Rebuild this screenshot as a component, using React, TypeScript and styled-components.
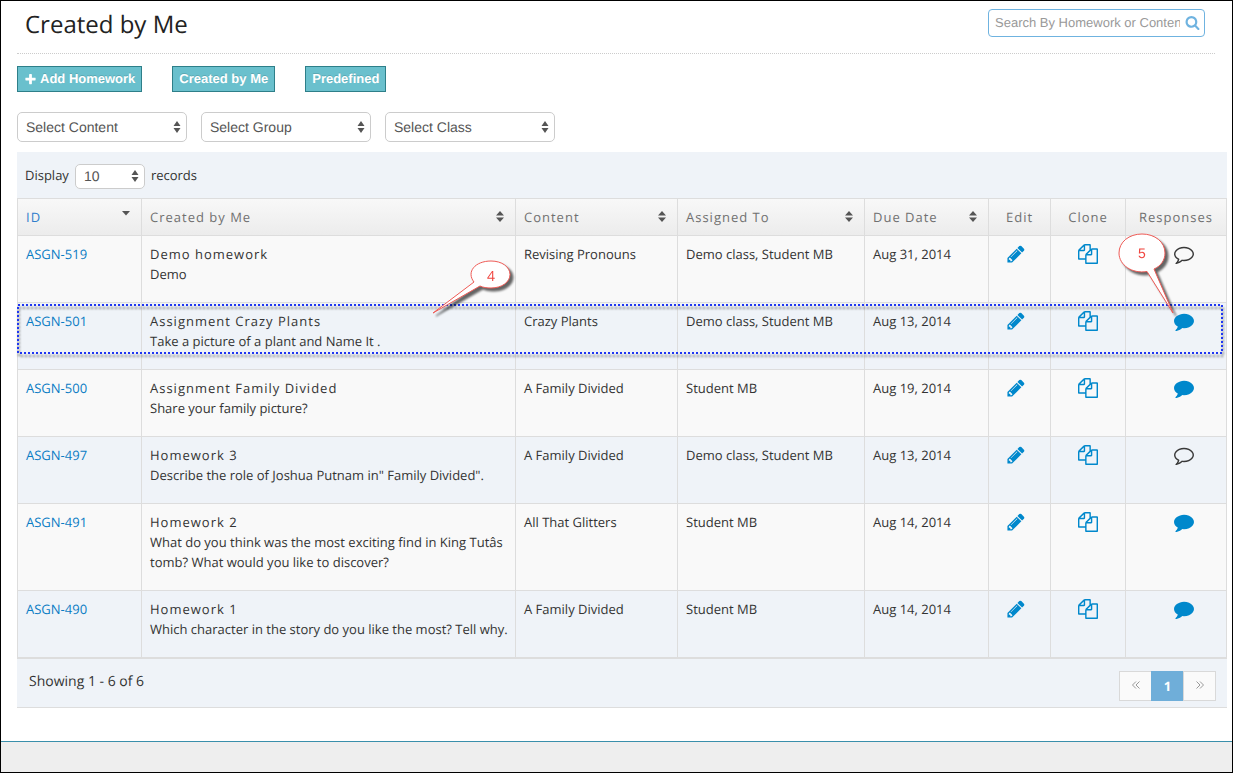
import React from 'react';
import styled, { createGlobalStyle, css } from 'styled-components';

const sans = `"Open Sans", "Noto Sans", sans-serif`;
const helvetica = `"Liberation Sans", Arial, sans-serif`;

const GlobalStyle = createGlobalStyle`
  * { box-sizing: border-box; }
  body {
    margin: 0;
    background: #fff;
    color: #333;
    font: 13px/20px ${sans};
    text-rendering: geometricPrecision;
  }
  button, input, select { margin: 0; font: inherit; color: inherit; text-rendering: inherit; }
`;

const Page = styled.div`
  display: flex;
  flex-direction: column;
  min-height: 100vh;
  border: 1px solid #000;
`;

const Main = styled.main`
  flex: 1;
  padding: 0 5px 32px 16px;
`;

const TitleBar = styled.header`
  display: flex;
  justify-content: space-between;
  align-items: center;
  height: 53px;
  margin-right: 12px;
  padding: 0 10px 8px 8px;
  border-bottom: 1px dotted #ccc;
`;

const Title = styled.h1`
  margin: 0;
  padding-top: 4px;
  color: #222;
  font-size: 24px;
  line-height: 32px;
  font-weight: 400;
`;

const SearchBox = styled.label`
  position: relative;
  display: block;
  width: 217px;
  height: 28px;
`;

const SearchInput = styled.input`
  width: 100%;
  height: 28px;
  padding: 0 24px 1px 6px;
  border: 1px solid #6fb3e0;
  border-radius: 4px;
  background: #fff;
  font: 13px/20px ${helvetica};
  color: #555;
  &::placeholder { color: #999; opacity: 1; }
`;

const SearchMark = styled.span`
  position: absolute;
  top: 6px;
  right: 5px;
  display: flex;
  color: #6fb3e0;
`;

const Actions = styled.div`
  display: flex;
  gap: 30px;
  margin-top: 12px;
`;

const ActionButton = styled.button`
  display: flex;
  align-items: center;
  gap: 3px;
  height: 26px;
  padding: 0 6px;
  border: 1px solid #2e7f89;
  background: #6ac0cd;
  color: #fff;
  font: 700 13px/20px ${helvetica};
  text-shadow: 0 -1px 0 rgba(0, 0, 0, 0.15);
`;

const Filters = styled.div`
  display: flex;
  gap: 14px;
  margin: 20px 0 10px;
`;

const SelectWrap = styled.span<{ $small?: boolean }>`
  position: relative;
  display: block;
  width: ${p => (p.$small ? 70 : 170)}px;
  height: ${p => (p.$small ? 25 : 30)}px;
`;

const SelectField = styled.select`
  appearance: none;
  width: 100%;
  height: 100%;
  padding: 0 20px 0 8px;
  border: 1px solid #ccc;
  border-radius: 5px;
  background: #fff;
  color: #555;
  font: 14px/20px ${helvetica};
`;

const SelectMark = styled.span`
  position: absolute;
  top: 0;
  right: 6px;
  height: 100%;
  display: flex;
  align-items: center;
  color: #555;
  pointer-events: none;
`;

const Panel = styled.section`
  background: #eff3f8;
`;

const LengthBar = styled.label`
  display: flex;
  align-items: center;
  gap: 6px;
  height: 46px;
  padding: 2px 8px 0;
`;

const LengthText = styled.span`
  padding-bottom: 2px;
`;

const Grid = styled.table`
  width: 100%;
  table-layout: fixed;
  border-collapse: separate;
  border-spacing: 0;
  border-left: 1px solid #ddd;
`;

const Th = styled.th<{ $center?: boolean; $active?: boolean }>`
  height: 38px;
  padding: 0 8px;
  border: solid #ddd;
  border-width: 1px 1px 1px 0;
  background: linear-gradient(#f8f8f8, #ececec);
  color: ${p => (p.$active ? '#307ecc' : '#707070')};
  font-weight: 400;
  letter-spacing: 1px;
  text-align: ${p => (p.$center ? 'center' : 'left')};
  white-space: nowrap;
`;

const SortButton = styled.button`
  display: flex;
  justify-content: space-between;
  align-items: center;
  width: 100%;
  padding: 0 2px 0 0;
  border: 0;
  background: none;
  letter-spacing: 1px;
  svg { color: #555; }
`;

const Row = styled.tr<{ $alt: boolean }>`
  position: relative;
  background: ${p => (p.$alt ? '#eff3f8' : '#f9f9f9')};
`;

const Td = styled.td<{ $icon?: 'edit' | 'clone' | 'responses' }>`
  position: relative;
  padding: 8px 2px 8px 8px;
  border: solid #ddd;
  border-width: 0 1px 1px 0;
  vertical-align: top;
  ${p => p.$icon && css`
    text-align: center;
    padding-left: ${p.$icon === 'responses' ? 24 : 8}px;
    padding-right: ${p.$icon === 'edit' ? 15 : 8}px;
  `}
`;

const FirstTd = styled(Td)`
  position: static;
`;

const IdLink = styled.a`
  color: #0a7cc4;
  text-decoration: none;
`;

const Name = styled.div`
  letter-spacing: 1px;
`;

const Description = styled.p`
  margin: 0 0 10px;
`;

const IconLink = styled.a<{ $dark?: boolean }>`
  display: inline-flex;
  vertical-align: top;
  color: ${p => (p.$dark ? '#393939' : '#0088cc')};
`;

const Highlight = styled.svg`
  position: absolute;
  left: -1px;
  top: 1px;
  width: calc(100% - 3px);
  height: 50px;
  overflow: visible;
  pointer-events: none;
  z-index: 1;
  filter: drop-shadow(1px 3px 1px rgba(0, 0, 0, 0.5));
  rect {
    width: calc(100% - 2px);
    height: 48px;
  }
`;

const Callout = styled.svg<{ $right: number; $top: number }>`
  position: absolute;
  right: ${p => p.$right}px;
  top: ${p => p.$top}px;
  overflow: visible;
  pointer-events: none;
  z-index: 2;
  filter: drop-shadow(3px 3px 1px rgba(0, 0, 0, 0.6));
`;

const PanelFooter = styled.footer`
  display: flex;
  justify-content: space-between;
  align-items: flex-start;
  height: 50px;
  padding: 12px 11px 0 12px;
  border: solid #ddd;
  border-width: 1px 0;
  font-size: 14px;
  line-height: 22px;
`;

const Pager = styled.nav`
  display: flex;
`;

const PageButton = styled.button<{ $current?: boolean }>`
  display: flex;
  align-items: center;
  justify-content: center;
  width: 33px;
  height: 30px;
  padding: 0;
  border: 1px solid ${p => (p.$current ? '#6faed9' : '#d9d9d9')};
  background: ${p => (p.$current ? '#6faed9' : '#fafafa')};
  color: ${p => (p.$current ? '#fff' : '#999')};
  font-size: 13px;
  font-weight: ${p => (p.$current ? 700 : 400)};
  & + & { margin-left: -1px; }
`;

const BottomStrip = styled.div`
  height: 31px;
  border-top: 1px solid #3a8fab;
  background: #eee;
`;

const paths = {
  pencil:
    'M491 1536l91-91-235-235-91 91v107h128v128h107zm523-928q0-22-22-22-10 0-17 7l-542 542q-7 7-7 17 0 22 22 22 10 0 17-7l542-542q7-7 7-17zm-54-192l416 416-832 832h-416v-416zm683 96q0 53-37 90l-166 166-416-416 166-165q36-38 90-38 53 0 91 38l235 234q37 39 37 91z',
  files:
    'M1696 384q40 0 68 28t28 68v1216q0 40-28 68t-68 28h-960q-40 0-68-28t-28-68v-288h-544q-40 0-68-28t-28-68v-672q0-40 20-88t48-76l408-408q28-28 76-48t88-20h416q40 0 68 28t28 68v328q68-40 128-40h416zm-544 213l-299 299h299v-299zm-640-384l-299 299h299v-299zm196 647l316-316v-416h-384v416q0 40-28 68t-68 28h-416v640h512v-256q0-40 20-88t48-76zm956 804v-1152h-384v416q0 40-28 68t-68 28h-416v640h896z',
  comment:
    'M1792 896q0 174-120 321.5t-326 233-450 85.5q-70 0-145-8-198 175-460 242-49 14-114 22-17 2-30.5-9t-17.5-29v-1q-3-4-.5-12t2-10 4.5-9.5l6-9 7-8.5 8-9q7-8 31-34.5t34.5-38 31-39.5 32.5-51 27-59 26-76q-157-89-247.5-220t-90.5-281q0-130 71-248.5t191-204.5 286-136.5 348-50.5q244 0 450 85.5t326 233 120 321.5z',
  commentOutline:
    'M896 384q-204 0-381.5 69.5t-282 187.5-104.5 255q0 112 71.5 213.5t201.5 175.5l87 50-27 96q-24 91-70 172 152-63 275-171l43-38 57 6q69 8 130 8 204 0 381.5-69.5t282-187.5 104.5-255-104.5-255-282-187.5-381.5-69.5zm896 512q0 174-120 321.5t-326 233-450 85.5q-70 0-145-8-198 175-460 242-49 14-114 22h-5q-15 0-27-10.5t-16-27.5v-1q-3-4-.5-12t2-10 4.5-9.5l6-9 7-8.5 8-9q7-8 31-34.5t34.5-38 31-39.5 32.5-51 27-59 26-76q-157-89-247.5-220t-90.5-281q0-174 120-321.5t326-233 450-85.5 450 85.5 326 233 120 321.5z',
  search:
    'M1216 832q0-185-131.5-316.5t-316.5-131.5-316.5 131.5-131.5 316.5 131.5 316.5 316.5 131.5 316.5-131.5 131.5-316.5zm512 832q0 52-38 90t-90 38q-54 0-90-38l-343-342q-179 124-399 124-143 0-273.5-55.5t-225-150-150-225-55.5-273.5 55.5-273.5 150-225 225-150 273.5-55.5 273.5 55.5 225 150 150 225 55.5 273.5q0 220-124 399l343 343q37 37 37 90z',
  plus:
    'M1600 736v192q0 40-28 68t-68 28h-416v416q0 40-28 68t-68 28h-192q-40 0-68-28t-28-68v-416h-416q-40 0-68-28t-28-68v-192q0-40 28-68t68-28h416v-416q0-40 28-68t68-28h192q40 0 68 28t28 68v416h416q40 0 68 28t28 68z',
};

const Icon = ({ name, size = 20 }: { name: keyof typeof paths; size?: number }) => (
  <svg width={size} height={size} viewBox="0 0 1792 1792" fill="currentColor" aria-hidden="true">
    <path d={paths[name]} />
  </svg>
);

const SortBoth = () => (
  <svg width="10" height="14" viewBox="0 0 10 14" fill="currentColor" aria-hidden="true">
    <path d="M5 1 9 5.5H1zM1 7.5h8L5 12z" />
  </svg>
);

const SortDown = () => (
  <svg width="10" height="14" viewBox="0 0 10 14" fill="currentColor" aria-hidden="true">
    <path d="M1 1h8L5 5.5z" />
  </svg>
);

const Arrows = () => (
  <svg width="8" height="14" viewBox="0 0 8 14" fill="currentColor" aria-hidden="true">
    <path d="M4 1 7.5 6h-7zM.5 8h7l-3.5 5z" />
  </svg>
);

const DoubleAngle = ({ next }: { next?: boolean }) => (
  <svg width="8" height="10" viewBox="0 0 8 10" fill="none" stroke="currentColor" aria-hidden="true">
    <path d={next ? 'M.5.5 4 4 .5 7.5M4 .5 7.5 4 4 7.5' : 'M7.5.5 4 4l3.5 3.5M4 .5.5 4 4 7.5'} />
  </svg>
);

const Select = ({ label, options, small }: { label: string; options: string[]; small?: boolean }) => (
  <SelectWrap $small={small}>
    <SelectField aria-label={label}>
      {options.map(o => <option key={o}>{o}</option>)}
    </SelectField>
    <SelectMark><Arrows /></SelectMark>
  </SelectWrap>
);

type Homework = {
  id: string; name: string; text: string; content: string; to: string; due: string;
  answered: boolean; marked?: boolean;
};

const rows: Homework[] = [
  { id: 'ASGN-519', name: 'Demo homework', text: 'Demo', content: 'Revising Pronouns', to: 'Demo class, Student MB', due: 'Aug 31, 2014', answered: false },
  { id: 'ASGN-501', name: 'Assignment Crazy Plants', text: 'Take a picture of a plant and Name It .', content: 'Crazy Plants', to: 'Demo class, Student MB', due: 'Aug 13, 2014', answered: true, marked: true },
  { id: 'ASGN-500', name: 'Assignment Family Divided', text: 'Share your family picture?', content: 'A Family Divided', to: 'Student MB', due: 'Aug 19, 2014', answered: true },
  { id: 'ASGN-497', name: 'Homework 3', text: 'Describe the role of Joshua Putnam in" Family Divided".', content: 'A Family Divided', to: 'Demo class, Student MB', due: 'Aug 13, 2014', answered: false },
  { id: 'ASGN-491', name: 'Homework 2', text: 'What do you think was the most exciting find in King Tutâs tomb? What would you like to discover?', content: 'All That Glitters', to: 'Student MB', due: 'Aug 14, 2014', answered: true },
  { id: 'ASGN-490', name: 'Homework 1', text: 'Which character in the story do you like the most? Tell why.', content: 'A Family Divided', to: 'Student MB', due: 'Aug 14, 2014', answered: true },
];

const columnWidths = [124, undefined, 162, 187, 124, 62, 75, 101];

const RowOutline = () => (
  <Highlight aria-hidden="true">
    <rect x="1" y="1" fill="none" stroke="#1f36f2" strokeWidth="2" strokeDasharray="2 2" />
  </Highlight>
);

const CalloutFour = () => (
  <Callout $right={3} $top={-43} width="80" height="56" viewBox="0 0 80 56">
    <path
      d="M42 22C34 12 43 1 59 1C70 1 78 7 78 14.5C78 22 70 28 59 28C55 28 51 27.5 48 26L1 53z"
      fill="#fff" stroke="#ee5a55" strokeWidth="1"
    />
    <text x="59" y="21" textAnchor="middle" fontSize="14" fill="#f0453f" fontFamily='"Open Sans", sans-serif'>4</text>
  </Callout>
);

const CalloutFive = () => (
  <Callout $right={51} $top={-70} width="57" height="82" viewBox="0 0 57 82">
    <path
      d="M29 38.5C14 41 1 32 1 20C1 9 11 1 24 1C37 1 47 9 47 20C47 27 43 33 36 36L55 80z"
      fill="#fff" stroke="#ee5a55" strokeWidth="1"
    />
    <text x="24" y="25" textAnchor="middle" fontSize="14" fill="#f0453f" fontFamily='"Liberation Sans", sans-serif'>5</text>
  </Callout>
);

export default function App() {
  return (
    <Page>
      <GlobalStyle />
      <Main>
        <TitleBar>
          <Title>Created by Me</Title>
          <SearchBox>
            <SearchInput type="text" placeholder="Search By Homework or Content" aria-label="Search" />
            <SearchMark><Icon name="search" size={15} /></SearchMark>
          </SearchBox>
        </TitleBar>

        <Actions>
          <ActionButton type="button"><Icon name="plus" size={13} />Add Homework</ActionButton>
          <ActionButton type="button">Created by Me</ActionButton>
          <ActionButton type="button">Predefined</ActionButton>
        </Actions>

        <Filters>
          <Select label="Content" options={['Select Content']} />
          <Select label="Group" options={['Select Group']} />
          <Select label="Class" options={['Select Class']} />
        </Filters>

        <Panel>
          <LengthBar>
            <LengthText>Display</LengthText>
            <Select small label="Records per page" options={['10', '25', '50', '100']} />
            <LengthText>records</LengthText>
          </LengthBar>

          <Grid>
            <colgroup>
              {columnWidths.map((w, i) => <col key={i} width={w} />)}
            </colgroup>
            <thead>
              <tr>
                <Th $active><SortButton type="button">ID<SortDown /></SortButton></Th>
                {['Created by Me', 'Content', 'Assigned To', 'Due Date'].map(h => (
                  <Th key={h}><SortButton type="button">{h}<SortBoth /></SortButton></Th>
                ))}
                {['Edit', 'Clone', 'Responses'].map(h => <Th key={h} $center>{h}</Th>)}
              </tr>
            </thead>
            <tbody>
              {rows.map((r, i) => (
                <Row key={r.id} $alt={i % 2 === 1}>
                  <FirstTd>
                    <IdLink href="#">{r.id}</IdLink>
                    {r.marked && <RowOutline />}
                  </FirstTd>
                  <Td>
                    <Name>{r.name}</Name>
                    <Description>{r.text}</Description>
                    {r.marked && <CalloutFour />}
                  </Td>
                  <Td>{r.content}</Td>
                  <Td>{r.to}</Td>
                  <Td>{r.due}</Td>
                  <Td $icon="edit"><IconLink href="#" aria-label="Edit"><Icon name="pencil" /></IconLink></Td>
                  <Td $icon="clone"><IconLink href="#" aria-label="Clone"><Icon name="files" /></IconLink></Td>
                  <Td $icon="responses">
                    <IconLink href="#" aria-label="Responses" $dark={!r.answered}>
                      <Icon name={r.answered ? 'comment' : 'commentOutline'} />
                    </IconLink>
                    {r.marked && <CalloutFive />}
                  </Td>
                </Row>
              ))}
            </tbody>
          </Grid>

          <PanelFooter>
            <span>Showing 1 - 6 of 6</span>
            <Pager aria-label="Pages">
              <PageButton type="button" aria-label="Previous"><DoubleAngle /></PageButton>
              <PageButton type="button" $current>1</PageButton>
              <PageButton type="button" aria-label="Next"><DoubleAngle next /></PageButton>
            </Pager>
          </PanelFooter>
        </Panel>
      </Main>
      <BottomStrip />
    </Page>
  );
}
